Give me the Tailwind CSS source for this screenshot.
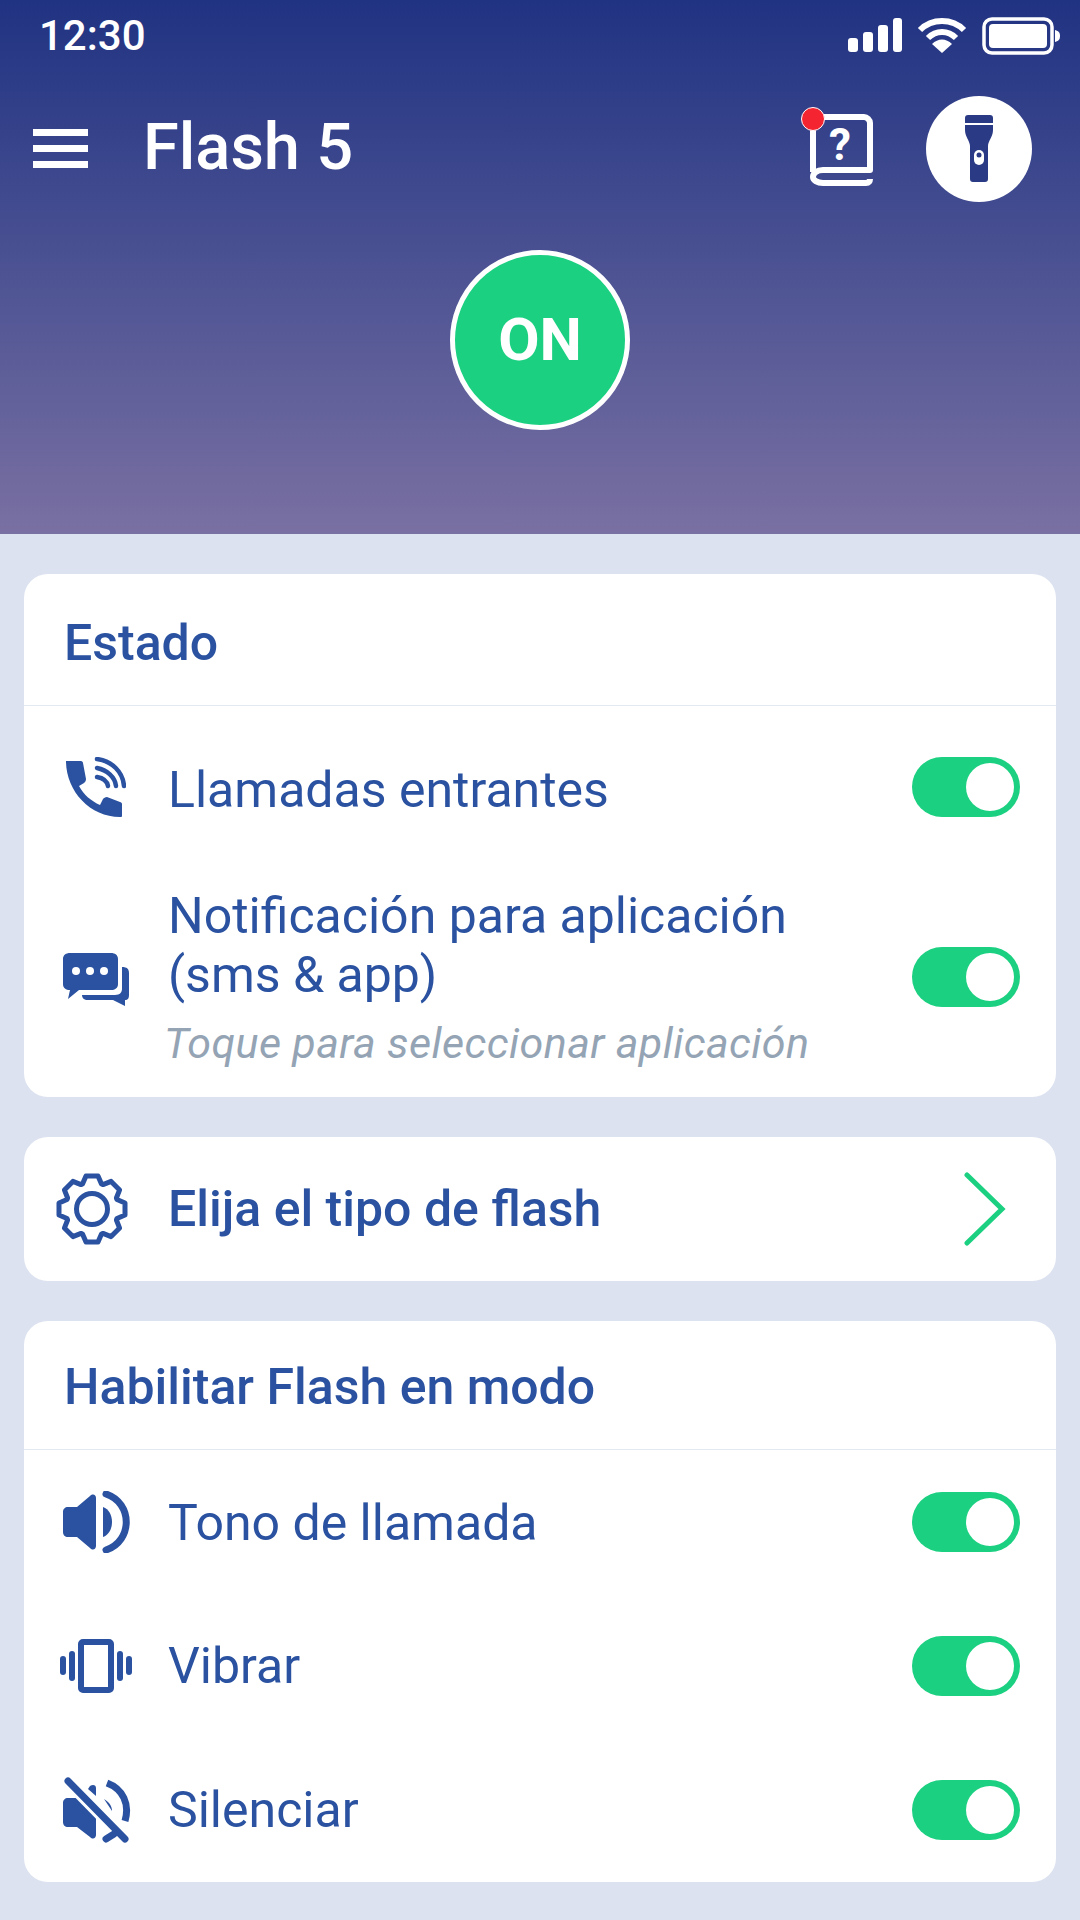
<!DOCTYPE html>
<html><head><meta charset="utf-8"><script src="https://cdn.jsdelivr.net/npm/@tailwindcss/browser@4"></script></head>
<body class="m-0">
<div class="w-[1080px] h-[1920px] overflow-hidden bg-[#dce2f0] font-['Roboto',sans-serif] text-[#2a52a0]">
  <header class="h-[534px] bg-gradient-to-b from-[#203282] to-[#7a70a2] text-white flex flex-col">
    <div class="h-[72px] pl-[39px] pr-[18px] flex items-center justify-between">
      <span class="text-[42px] leading-none font-medium">12:30</span>
      <div class="flex items-center gap-[15px]">
        <svg width="56" height="36" viewBox="0 0 56 36" fill="#fff"><rect x="2" y="20" width="10" height="14" rx="3"/><rect x="17" y="14" width="10" height="20" rx="3"/><rect x="32" y="7" width="10" height="27" rx="3"/><rect x="47" y="0" width="9" height="34" rx="3"/></svg>
        <svg width="50" height="38" viewBox="0 0 50 38" fill="none" stroke="#fff" stroke-width="6"><path d="M3 13C15 1 35 1 47 13"/><path d="M11 21C19 13 31 13 39 21"/><path fill="#fff" stroke="none" d="M15 27C21 21 29 21 35 27L25 36Z"/></svg>
        <svg width="80" height="40" viewBox="0 0 80 40"><rect x="2" y="3" width="68" height="34" rx="8" fill="none" stroke="#fff" stroke-width="3.5"/><rect x="7" y="8" width="58" height="24" rx="4" fill="#fff"/><path d="M73 14C77 15 78 17 78 20C78 23 77 25 73 26Z" fill="#fff"/></svg>
      </div>
    </div>
    <div class="h-[150px] mt-[2px] pl-[33px] pr-[48px] flex items-center">
      <div class="w-[55px] mb-[2px] flex flex-col gap-[9px]"><span class="block h-[7px] bg-white"></span><span class="block h-[7px] bg-white"></span><span class="block h-[7px] bg-white"></span></div>
      <h1 class="ml-[55px] mb-[4px] text-[65px] leading-none font-medium">Flash 5</h1>
      <div class="ml-auto mr-[53px] relative w-[63px] h-[72px] mt-[2px]">
        <svg class="block" width="63" height="72" viewBox="0 0 63 72" fill="none" stroke="#fff" stroke-width="6" stroke-linejoin="round"><path d="M3 58V9C3 6 6 3 9 3H54C57 3 60 6 60 9V56H13C7 56 3 59 3 63C3 66 7 69 13 69H56C59 69 60 67 60 65"/><text x="30" y="46" font-family="Roboto,sans-serif" font-weight="700" font-size="44" text-anchor="middle" fill="#fff" stroke="none">?</text></svg>
        <span class="absolute left-[-9px] top-[-7px] w-[24px] h-[24px] rounded-full bg-[#f42430] border border-white"></span>
      </div>
      <div class="w-[106px] h-[106px] rounded-full bg-white flex items-center justify-center">
        <svg width="30" height="68" viewBox="0 0 30 68" fill="#2a3a85"><path d="M1 3C1 1 2 0 4 0H26C28 0 29 1 29 3V8H1Z"/><path d="M1 10H29V15C29 22 24 26 24 31V64C24 66 23 67 21 67H9C7 67 6 66 6 64V31C6 26 1 22 1 15Z"/><rect x="10" y="35" width="10" height="15" rx="5" fill="#fff"/><circle cx="15" cy="40" r="2.5" fill="#2a3a85"/></svg>
      </div>
    </div>
    <div class="flex justify-center mt-[26px]">
      <div class="w-[180px] h-[180px] rounded-full bg-[#1bd080] border-[5px] border-white flex items-center justify-center text-[60px] font-bold leading-none">ON</div>
    </div>
  </header>

  <main class="px-[24px] pt-[40px] flex flex-col gap-[40px]">
    <section class="bg-white rounded-[24px] h-[523px]">
      <h2 class="h-[132px] px-[40px] pt-[8px] flex items-center text-[50px] font-medium border-b border-[#e4e8f0]">Estado</h2>
      <div class="h-[164px] flex items-center pr-[36px]">
        <div class="w-[144px] pl-[42px] shrink-0 mb-[2px]">
          <svg class="block" width="60" height="60" viewBox="0 0 60 60" fill="#2a52a0"><path d="M0 4H15C16 4 17 5 17 6L20 22C20 24 19 25 18 26L13 29C18 38 25 44 34 48L37 42C38 41 39 40 41 40L54 45C55 45 56 46 56 47V59C56 60 55 60 54 60C24 60 0 34 0 4Z"/><g fill="none" stroke="#2a52a0" stroke-width="4.5" stroke-linecap="round"><path d="M31 2C46 4 57 15 58 29"/><path d="M31 11C41 13 49 20 50 29"/><path d="M31 20C37 21 41 24 42 29"/></g></svg>
        </div>
        <span class="text-[50px] leading-none mt-[4px]">Llamadas entrantes</span>
        <span class="ml-auto w-[108px] h-[60px] rounded-full bg-[#1bd080] flex justify-end items-center pr-[6px] shrink-0 mb-[2px]"><span class="w-[48px] h-[48px] rounded-full bg-white"></span></span>
      </div>
      <div class="h-[226px] flex items-center pr-[36px] relative">
        <div class="w-[144px] pl-[39px] shrink-0 mb-[6px]">
          <svg class="block" width="66" height="54" viewBox="0 0 66 54" fill="#2a52a0"><path d="M7 0H48C52 0 55 2 55 6V31C55 35 52 37 48 37H16L5 46L7 37C3 37 0 35 0 31V6C0 2 3 0 7 0Z"/><path d="M59 14C64 14 66 16 66 20V42C66 45 65 47 62 47V53L50 47H25C21 47 19 45 19 42H52C57 42 59 39 59 36Z"/><circle cx="13" cy="18" r="4" fill="#fff"/><circle cx="27" cy="18" r="4" fill="#fff"/><circle cx="41" cy="18" r="4" fill="#fff"/></svg>
        </div>
        <div class="flex flex-col self-start">
          <span class="text-[50px] leading-[59px] mt-[17px] w-[660px]">Notificación para aplicación<br>(sms &amp; app)</span>
          <span class="text-[43px] leading-none italic text-[#94a4b4] ml-[-4px] mt-[17px] tracking-[0.4px] whitespace-nowrap">Toque para seleccionar aplicación</span>
        </div>
        <span class="ml-auto w-[108px] h-[60px] rounded-full bg-[#1bd080] flex justify-end items-center pr-[6px] shrink-0 mb-[12px]"><span class="w-[48px] h-[48px] rounded-full bg-white"></span></span>
      </div>
    </section>

    <section class="bg-white rounded-[24px] h-[144px] flex items-center pr-[50px]">
      <div class="w-[144px] pl-[32px] shrink-0">
        <svg class="block" width="72" height="72" viewBox="0 0 72 72" fill="none" stroke="#2a52a0" stroke-width="5" stroke-linejoin="round"><path d="M26.5 11L30 3H42L45.500 11L47 11.600L55.100 8.400L63.600 16.900L60.400 25L61 26.500L69 30V42L61 45.500L60.400 47L63.600 55.100L55.100 63.600L47 60.400L45.500 61L42 69H30L26.500 61L25 60.400L16.900 63.600L8.400 55.100L11.600 47L11 45.500L3 42V30L11 26.500L11.600 25L8.400 16.900L16.900 8.400L25 11.600Z"/><circle cx="36" cy="36" r="15.500"/></svg>
      </div>
      <span class="text-[50px] leading-none font-medium">Elija el tipo de flash</span>
      <svg class="ml-auto" width="42" height="74" viewBox="0 0 42 74" fill="none" stroke="#1bd080" stroke-width="5" stroke-linecap="round"><path d="M3 3L38 37L3 71"/></svg>
    </section>

    <section class="bg-white rounded-[24px] h-[561px]">
      <h2 class="h-[129px] px-[40px] pt-[4px] flex items-center text-[50px] font-medium border-b border-[#e4e8f0]">Habilitar Flash en modo</h2>
      <div class="h-[144px] flex items-center pr-[36px]">
        <div class="w-[144px] pl-[39px] shrink-0">
          <svg class="block" width="68" height="62" viewBox="0 0 68 62" fill="#2a52a0"><path d="M5 16H14L27 5C30 2 33 4 33 7V55C33 58 30 60 27 57L14 46H5C2 46 0 44 0 41V21C0 18 2 16 5 16Z"/><path d="M40 16C52 20 52 42 40 46Z"/><path d="M43 3C70 12 70 50 43 59" fill="none" stroke="#2a52a0" stroke-width="7" stroke-linecap="round"/></svg>
        </div>
        <span class="text-[50px] leading-none mt-[1px]">Tono de llamada</span>
        <span class="ml-auto w-[108px] h-[60px] rounded-full bg-[#1bd080] flex justify-end items-center pr-[6px] shrink-0"><span class="w-[48px] h-[48px] rounded-full bg-white"></span></span>
      </div>
      <div class="h-[144px] flex items-center pr-[36px]">
        <div class="w-[144px] pl-[36px] shrink-0">
          <svg class="block" width="72" height="54" viewBox="0 0 72 54" fill="#2a52a0"><rect x="0" y="17" width="6" height="19" rx="3"/><rect x="9" y="12" width="6" height="30" rx="3"/><rect x="57" y="12" width="6" height="30" rx="3"/><rect x="66" y="17" width="6" height="19" rx="3"/><rect x="21" y="3" width="30" height="48" rx="2" fill="none" stroke="#2a52a0" stroke-width="6"/></svg>
        </div>
        <span class="text-[50px] leading-none">Vibrar</span>
        <span class="ml-auto w-[108px] h-[60px] rounded-full bg-[#1bd080] flex justify-end items-center pr-[6px] shrink-0"><span class="w-[48px] h-[48px] rounded-full bg-white"></span></span>
      </div>
      <div class="h-[144px] flex items-center pr-[36px]">
        <div class="w-[144px] pl-[39px] shrink-0">
          <svg class="block" width="68" height="66" viewBox="0 0 68 66" fill="#2a52a0"><path d="M5 21H17L33 37V58C33 61 30 63 27 60L14 50H5C2 50 0 48 0 45V26C0 23 2 21 5 21Z"/><path d="M25 12L27 9C30 7 33 8 33 11V19Z"/><path d="M41 22C46 25 49 29 49 34Z"/><path d="M44 6C60 12 67 27 62 44" fill="none" stroke="#2a52a0" stroke-width="7"/><path d="M5 4L62 62" stroke="#fff" stroke-width="13"/><path d="M5 4L62 62" stroke="#2a52a0" stroke-width="7" stroke-linecap="round"/><path d="M43 62L51 57" stroke="#2a52a0" stroke-width="7" stroke-linecap="round"/></svg>
        </div>
        <span class="text-[50px] leading-none">Silenciar</span>
        <span class="ml-auto w-[108px] h-[60px] rounded-full bg-[#1bd080] flex justify-end items-center pr-[6px] shrink-0"><span class="w-[48px] h-[48px] rounded-full bg-white"></span></span>
      </div>
    </section>
  </main>
</div>
</body></html>
